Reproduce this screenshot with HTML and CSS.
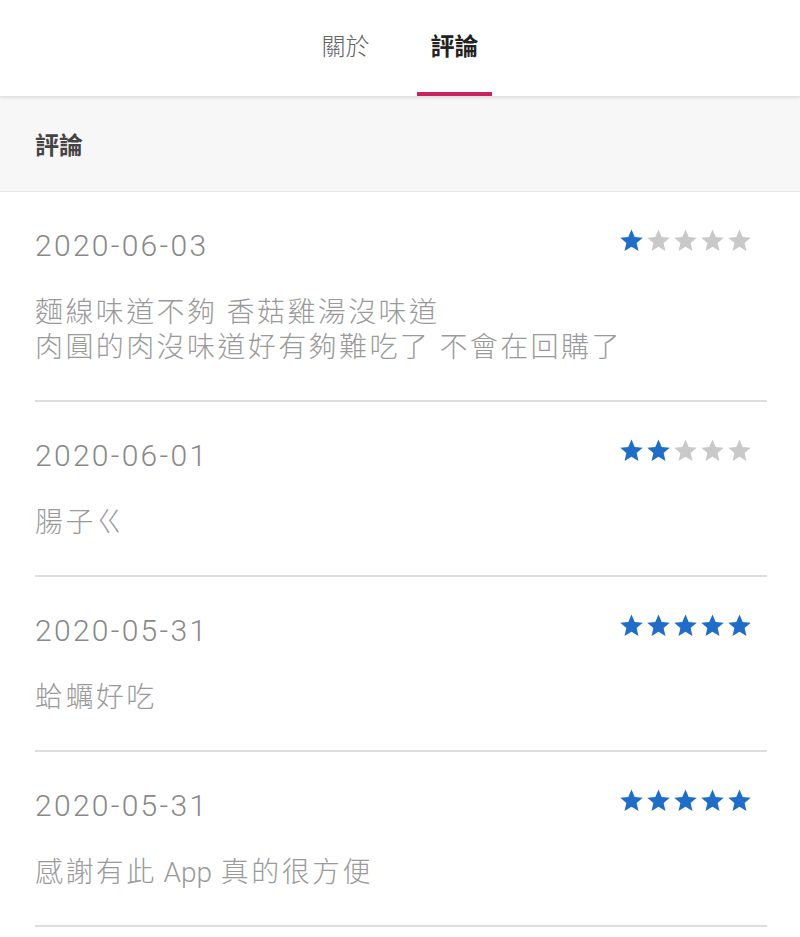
FILE: index.html
```html
<!DOCTYPE html>
<html lang="zh-Hant">
<head>
<meta charset="utf-8">
<title>評論</title>
<link rel="stylesheet" href="styles.css">
</head>
<body>
<svg width="0" height="0" class="defs">
  <defs>
    <path id="star" d="M12 2.2l2.85 6.6 7.15.65-5.45 4.75 1.65 7.05L12 17.55l-6.2 3.7 1.65-7.05L2 9.45l7.15-.65z"/>
  </defs>
</svg>
<nav class="tabs">
  <div class="tab">關於</div>
  <div class="tab active">評論</div>
</nav>
<div class="section-head">評論</div>
<main class="reviews">
  <article class="review">
    <div class="review-top">
      <span class="date">2020-06-03</span>
      <span class="stars">
        <svg class="star on" viewBox="0 0 24 24"><use href="#star"/></svg><svg class="star" viewBox="0 0 24 24"><use href="#star"/></svg><svg class="star" viewBox="0 0 24 24"><use href="#star"/></svg><svg class="star" viewBox="0 0 24 24"><use href="#star"/></svg><svg class="star" viewBox="0 0 24 24"><use href="#star"/></svg>
      </span>
    </div>
    <p class="text">麵線味道不夠 香菇雞湯沒味道<br>肉圓的肉沒味道好有夠難吃了 不會在回購了</p>
  </article>
  <article class="review">
    <div class="review-top">
      <span class="date">2020-06-01</span>
      <span class="stars">
        <svg class="star on" viewBox="0 0 24 24"><use href="#star"/></svg><svg class="star on" viewBox="0 0 24 24"><use href="#star"/></svg><svg class="star" viewBox="0 0 24 24"><use href="#star"/></svg><svg class="star" viewBox="0 0 24 24"><use href="#star"/></svg><svg class="star" viewBox="0 0 24 24"><use href="#star"/></svg>
      </span>
    </div>
    <p class="text">腸子ㄍ</p>
  </article>
  <article class="review">
    <div class="review-top">
      <span class="date">2020-05-31</span>
      <span class="stars">
        <svg class="star on" viewBox="0 0 24 24"><use href="#star"/></svg><svg class="star on" viewBox="0 0 24 24"><use href="#star"/></svg><svg class="star on" viewBox="0 0 24 24"><use href="#star"/></svg><svg class="star on" viewBox="0 0 24 24"><use href="#star"/></svg><svg class="star on" viewBox="0 0 24 24"><use href="#star"/></svg>
      </span>
    </div>
    <p class="text">蛤蠣好吃</p>
  </article>
  <article class="review">
    <div class="review-top">
      <span class="date">2020-05-31</span>
      <span class="stars">
        <svg class="star on" viewBox="0 0 24 24"><use href="#star"/></svg><svg class="star on" viewBox="0 0 24 24"><use href="#star"/></svg><svg class="star on" viewBox="0 0 24 24"><use href="#star"/></svg><svg class="star on" viewBox="0 0 24 24"><use href="#star"/></svg><svg class="star on" viewBox="0 0 24 24"><use href="#star"/></svg>
      </span>
    </div>
    <p class="text">感謝有此<span class="latin"> App </span>真的很方便</p>
  </article>
</main>
</body>
</html>
```
FILE: styles.css
```css
* { box-sizing: border-box; }
html, body {
  margin: 0;
  padding: 0;
  background: #fff;
}
body {
  width: 800px;
  font-family: "Roboto", "Noto Sans CJK TC", "Noto Sans", sans-serif;
  color: #333;
}
.defs { position: absolute; width: 0; height: 0; }

.tabs {
  height: 97px;
  display: flex;
  justify-content: center;
  gap: 34px;
  border-bottom: 1px solid #e3e3e3;
  box-shadow: 0 1px 3px rgba(0, 0, 0, 0.10);
  position: relative;
  z-index: 1;
  background: #fff;
}
.tab {
  width: 75px;
  display: flex;
  align-items: center;
  justify-content: center;
  padding-bottom: 4px;
  font-family: "Noto Sans CJK TC", sans-serif;
  font-size: 24px;
  font-weight: 300;
  color: #666;
  border-bottom: 4px solid transparent;
}
.tab.active {
  color: #222;
  font-weight: 700;
  border-bottom-color: #c9245f;
}

.section-head {
  height: 95px;
  background: #f7f7f7;
  border-bottom: 1px solid #e8e8e8;
  display: flex;
  align-items: center;
  padding-left: 35px;
  padding-bottom: 2px;
  font-family: "Noto Sans CJK TC", sans-serif;
  font-size: 24px;
  font-weight: 700;
  color: #444;
}

.reviews {
  margin: 0 33px 0 35px;
}
.review {
  padding: 36px 0 35px;
  border-bottom: 2px solid #dedede;
}
.review-top {
  display: flex;
  justify-content: space-between;
  align-items: center;
  height: 36px;
}
.date {
  font-family: "Roboto", sans-serif;
  font-size: 30px;
  font-weight: 300;
  letter-spacing: 2.3px;
  line-height: 36px;
  color: #888;
}
.stars {
  display: flex;
  margin-right: 14px;
  margin-bottom: 12px;
}
.star {
  width: 27px;
  height: 27px;
  fill: #c9c9c9;
}
.star.on { fill: #1f6dc8; }
.text {
  margin: 31px 0 0;
  font-family: "Roboto", "Noto Sans CJK TC", sans-serif;
  font-size: 28px;
  font-weight: 300;
  line-height: 35px;
  letter-spacing: 2.4px;
  color: #9a9a9a;
}
.latin {
  letter-spacing: 0;
  margin-right: 2px;
}
```
